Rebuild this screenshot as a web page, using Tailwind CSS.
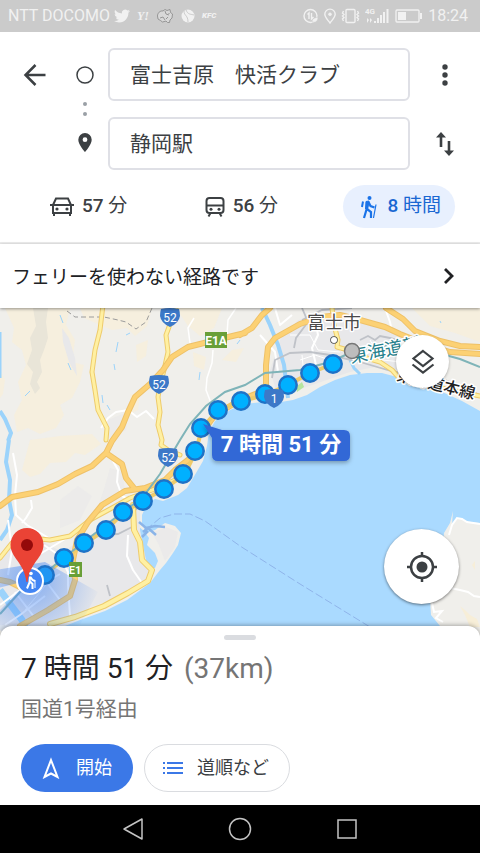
<!DOCTYPE html>
<html lang="ja">
<head>
    <meta charset="UTF-8"/>
    <meta name="viewport" content="width=device-width, initial-scale=1"/>
    <title>富士吉原 快活クラブ → 静岡駅</title>
    <script src="https://cdn.jsdelivr.net/npm/@tailwindcss/browser@4"></script>
</head>

<body class="flex min-h-screen flex-col bg-white font-['Roboto','Noto_Sans_CJK_JP',sans-serif] text-[#3c4043]">

    <!-- status bar -->
    <div class="flex h-8 items-center justify-between bg-[#cbcbcb] px-2 text-base leading-8 text-[#f1f1f1]">
        <div class="flex items-center gap-1">
            <span>NTT DOCOMO</span>
            <svg class="h-4 w-4" viewBox="0 0 24 24" fill="currentColor"><path d="M23.95 4.57a10 10 0 01-2.82.77 4.96 4.96 0 002.16-2.72c-.95.55-2 .95-3.13 1.18a4.92 4.92 0 00-8.38 4.48C7.69 8.1 4.07 6.13 1.64 3.16a4.82 4.82 0 00-.67 2.48c0 1.71.87 3.21 2.19 4.1a4.9 4.9 0 01-2.23-.62v.06a4.92 4.92 0 003.95 4.83 5 5 0 01-2.21.08 4.94 4.94 0 004.6 3.42A9.87 9.87 0 010 19.54a14 14 0 007.55 2.21c9.05 0 14-7.5 14-13.98l-.02-.64a9.94 9.94 0 002.46-2.55z"/></svg>
            <span class="w-[18px] text-center font-['Liberation_Serif',serif] text-xs font-bold italic">Y!</span>
            <svg class="h-4 w-[18px]" viewBox="0 0 18 16" fill="none" stroke="#8e8e8e" stroke-width=".9"><path fill="#d8d8d8" d="M1.500 8C1.500 5 4 2.500 7 3l2-1.500 2 1 3-1 .5 3 2 1.500-.5 4-2 2-.5 2.500H11.500L10 13 6.500 14 4.500 12.500 2 11z"/><path d="M9 3l1 3 3 1M4 10l3-1 2 3M12 9l-2 2M13 5v1"/></svg>
            <svg class="h-4 w-5" viewBox="0 0 20 16"><circle cx="10" cy="8" r="6.500" fill="currentColor"/><path d="M6 3c0 5 4 4 4 11M8 2c2 5 5 4 8 5" fill="none" stroke="#cbcbcb" stroke-width="1"/></svg>
            <span class="text-[8px] font-black italic">KFC</span>
        </div>
        <div class="flex items-center gap-[5px]">
            <svg class="h-4 w-4" viewBox="0 0 16 16" fill="none" stroke="currentColor" stroke-width="1.400"><circle cx="7.500" cy="8" r="6.500"/><path d="M4.500 6.500L6 5v6M8.500 5v6l2-2"/><path d="M9 14c0-4 3-4 6-5 0 4-2 6-6 5z" fill="currentColor" stroke="#cbcbcb" stroke-width=".6"/></svg>
            <svg class="h-4 w-3" viewBox="1 0 12 16" fill="none" stroke="currentColor" stroke-width="1.400"><path d="M7 15C4 11 1.800 9 1.800 6.300a5.200 5.200 0 0110.400 0C12.200 9 10 11 7 15z"/><circle cx="7" cy="6.300" r="1.700" fill="currentColor" stroke="none"/></svg>
            <svg class="h-4 w-[19px]" viewBox="0 0 19 16" fill="none" stroke="currentColor" stroke-width="1.400"><rect x="5" y="1.500" width="9" height="13" rx="1"/><path d="M2.500 3l-1 2 1.500 1.500L1.500 8 3 9.500 1.500 11l1 2M16.500 3l1 2L16 6.500 17.500 8 16 9.500l1.500 1.500-1 2"/></svg>
            <svg class="h-[18px] w-[25px]" viewBox="0 0 25 18" fill="currentColor"><text x="0" y="7" font-size="8" font-weight="700">4G</text><path d="M2 16v-5l2 2zM5 11v5l2-3zM9 14h2v2H9zM12 11h2v5h-2zM15 8h2v8h-2zM18 5h2v11h-2zM21.500 2h2v14h-2z"/></svg>
            <svg class="h-4 w-7" viewBox="0 0 28 16"><rect x="1" y="2" width="23" height="12" rx="1" fill="none" stroke="currentColor" stroke-width="1.300"/><path d="M3 4h8v8H3zM25 5h2v6h-2z" fill="currentColor"/></svg>
            <time class="pr-1">18:24</time>
        </div>
    </div>

    <!-- origin / destination -->
    <header class="border-b-2 border-[#ececec] pt-4 pb-[14px]">
        <form class="grid grid-cols-[70px_30px_1fr_70px] gap-y-4">
            <button type="button" aria-label="戻る" class="flex items-center justify-center">
                <svg class="h-6 w-6" viewBox="0 0 24 24" fill="none" stroke="currentColor" stroke-width="2.500"><path d="M22.500 12H3M12.500 2L2.500 12l10 10"/></svg>
            </button>
            <div class="row-span-2 flex flex-col items-center justify-between py-[17px]">
                <svg class="h-5 w-5" viewBox="0 0 20 20"><circle cx="10" cy="10" r="8" fill="none" stroke="currentColor" stroke-width="1.500"/></svg>
                <svg class="h-[14px] w-1" viewBox="0 0 4 14" fill="#9aa0a6"><circle cx="2" cy="2" r="2"/><circle cx="2" cy="12" r="2"/></svg>
                <svg class="h-5 w-4" viewBox="0 0 16 20"><path fill="currentColor" fill-rule="evenodd" d="M8 0a6.700 6.700 0 00-6.700 6.700C1.300 11.700 8 19 8 19s6.700-7.300 6.700-12.300A6.700 6.700 0 008 0zm0 4.300a2.400 2.400 0 110 4.800 2.400 2.400 0 010-4.800z"/></svg>
            </div>
            <input type="text" aria-label="出発地" value="富士吉原　快活クラブ" class="ml-2 h-[53px] min-w-0 rounded-md border-2 border-[#dfe0e6] px-5 pb-1 text-[21px]"/>
            <button type="button" aria-label="メニュー" class="flex items-center justify-center">
                <svg class="h-6 w-6" viewBox="0 0 24 24" fill="currentColor"><circle cx="12" cy="4" r="2.700"/><circle cx="12" cy="12" r="2.700"/><circle cx="12" cy="20" r="2.700"/></svg>
            </button>
            <span></span>
            <input type="text" aria-label="目的地" value="静岡駅" class="ml-2 h-[53px] min-w-0 rounded-md border-2 border-[#dfe0e6] px-5 pb-1 text-[21px]"/>
            <button type="button" aria-label="出発地と目的地を入れ替え" class="flex items-center justify-center">
                <svg class="h-6 w-5" viewBox="0 0 20 24" fill="none" stroke="currentColor" stroke-width="2.600"><path d="M6 15V3M14 9v12"/><path d="M1 5.500L6 0l5 5.500zM9 18.500l5 5.500 5-5.500z" fill="currentColor" stroke="none"/></svg>
            </button>
        </form>

        <nav class="mt-[15px] flex justify-between pr-[25px] pl-[30px] text-[19px] font-medium">
            <button class="flex h-[43px] items-center gap-2 px-5">
                <svg class="h-5 w-6" viewBox="0 0 24 20" fill="none" stroke="currentColor" stroke-width="2"><path d="M3 8l3-6.500h12L21 8v8H3zM3 8h18M4 16v3M20 16v3M0 8h3M21 8h3"/><circle cx="7" cy="12" r="1.600" fill="currentColor" stroke="none"/><circle cx="17" cy="12" r="1.600" fill="currentColor" stroke="none"/></svg>
                <span>57 <span class="font-normal">分</span></span>
            </button>
            <button class="flex h-[43px] items-center gap-2 pr-6 pl-4">
                <svg class="h-5 w-5" viewBox="0 0 20 20" fill="none" stroke="currentColor" stroke-width="2"><rect x="1.500" y="1" width="17" height="15" rx="3"/><path d="M1.500 8.500h17M5.500 16L3.500 19.500M14.500 16l2 3.500"/><circle cx="6" cy="12.200" r="1.500" fill="currentColor" stroke="none"/><circle cx="14" cy="12.200" r="1.500" fill="currentColor" stroke="none"/></svg>
                <span>56 <span class="font-normal">分</span></span>
            </button>
            <button class="flex h-[43px] items-center gap-2 rounded-full bg-[#e8f0fe] pr-[14px] pl-4 text-[#1967d2]">
                <svg class="h-6 w-5" viewBox="0 0 20 24" fill="#1a73e8" stroke="#1a73e8"><circle cx="10.500" cy="3" r="2" stroke="none"/><path fill="none" stroke-width="2.200" d="M9 7L7.500 14.500 5 23M8 14l4 3v6M9.500 7l2 4 4 1.500"/><path d="M7 6.500l3-.5-1.500 9L6.500 14z"/><path fill="none" stroke-width="2" d="M4 6.500l-1 5.500"/><path fill="none" stroke-width="1.200" d="M17 9.500L14.500 23"/></svg>
                <span>8 <span class="font-normal">時間</span></span>
            </button>
        </nav>
    </header>

    <a href="#" class="relative z-10 flex h-16 items-center justify-between bg-white pr-[25px] pl-3 text-[#202124] shadow-[0_1px_3px_rgba(0,0,0,0.4)]">
        <span class="pt-1 text-[19px]">フェリーを使わない経路です</span>
        <svg class="h-4 w-3" viewBox="0 0 12 16" fill="none" stroke="currentColor" stroke-width="2.800"><path d="M2 1l7 7-7 7"/></svg>
    </a>

    <!-- map -->
    <main class="relative min-h-[331px] flex-1 overflow-hidden bg-[#aadaff]">
        <svg class="absolute inset-0 h-full w-full" viewBox="0 308 480 331" preserveAspectRatio="xMidYMid slice">
            <defs>
                <radialGradient id="beam" gradientUnits="userSpaceOnUse" cx="30" cy="580" r="72">
                    <stop offset="0" stop-color="#4285f4" stop-opacity=".6"/>
                    <stop offset="1" stop-color="#4285f4" stop-opacity="0"/>
                </radialGradient>
                <filter id="drop" x="-20%" y="-40%" width="140%" height="200%"><feDropShadow dx="0" dy="2" stdDeviation="2" flood-opacity=".3"/></filter>
                <path id="shield" d="M-9-9Q0-11 9-9Q10-6 10-2Q9 5 0 9Q-9 5-10-2Q-10-6-9-9z"/>
            </defs>

            <!-- land -->
            <path fill="#f0efeb" d="M0 300H480V411L462 401 440 391 420 383 397 377 382 373 367 373 350 375 335 380 320 387 307 395 293 400 281 402 262 402 244 404 230 410 215 421 209 432 207 446 203 461 196 473 187 488 178 495 163 501 155 499 147 504 142 515 142 523 146 533 155 530 165 523 175 526 181 533 178 545 173 553 166 563 160 570 150 583 127 600 105 611 80 620 60 628 40 640H0z"/>
            <path fill="#aadaff" d="M138 526L144 531 149 538 147 545 155 553 158 561 155 568 149 568 143 561 141 550 137 541z"/>
            <path fill="#f0efeb" d="M453 511L450 523 444 533 440 570 430 600 431 615 440 626 446 640H480V523L467 522 462 518 457 518 452 525z"/>
            <path fill="none" stroke="#fff" stroke-width="2" d="M480 524L467 522 462 519 457 518 452 525 449 535M450 588L460 590 468 592 474 596 480 597M432 603L434 612 442 611 436 618 443 622"/>
            <path fill="#f7eed8" d="M472 565l3-4v9zM460 606l6 5 4 4 7 4 3 8h-10l-5-12z"/>

            <!-- hills -->
            <path fill="#f7efdc" d="M5 308H70L66 325 75 340 72 362 84 365 80 382 72 398 60 405 64 415 56 428 40 434 28 428 17 432 14 415 22 400 18 382 26 365 22 350 12 342 14 328zM80 308H152L147 326 135 336 127 328 112 330 98 324 84 318zM136 345L148 340 146 356 137 362zM0 370l5 10-2 14-3 4zM30 440L60 436 92 434 101 444 85 455 75 453 66 462 50 463 40 474 30 477 22 470zM176 308H222L214 328 200 336 188 326zM193 352L206 357 204 370 194 366zM130 395L140 392 138 410 130 414zM222 360l10-10 12-2-8 14zM412 308H480V342L455 333 430 326z" opacity=".85"/>
            <path fill="#e9e5d8" d="M33 308H48L46 322 48 338 44 350 40 360 42 372 37 382 40 388 35 394 30 384 33 372 27 364 32 350 30 338 36 326z"/>
            <g fill="#e8e8ea">
                <path d="M298 320L345 312 375 325 420 345 430 366 405 372 380 366 350 372 318 383 292 392 276 390 270 370 280 340z"/>
                <path d="M62 328l7 10 6 20 2 18-8-14-6-20zM10 545L40 540 62 552 90 535 112 525 124 512 140 505 140 530 150 580 120 596 84 610 50 625H0V560z"/>
                <path d="M110 468l12 4 3 18-14 10-12 4 6-18zM60 500l18-14 14 10-12 24-20 8zM108 420l20-8-2 18-18 8z" opacity=".5"/>
                <path d="M152 533l14-6 12 5-3 15-10 14-6-16z" opacity=".7"/>
            </g>
            <path fill="#b6e59e" d="M296 387l6-5 2 5-7 5z"/>

            <!-- rivers -->
            <g fill="none" stroke="#9bd3fb">
                <path stroke-width="3" d="M0 332V378"/>
                <path stroke-width="4" d="M9 440L6 462 10 480 9 500 12 515 7 530 0 540M0 411l5 8 6 14-3 8"/>
                <path stroke-width="7" d="M0 590L10 604 22 620 30 640"/>
                <path stroke-width="4" d="M262 308L270 325 278 345 284 365 288 398"/>
                <path stroke-width="3" d="M350 360l4 8 6 6"/>
                <path stroke-width="1" d="M60 315l3 8M118 342l-2 10M114 364l1 6M68 363l3 7M25 396l5-5M102 395l1 8M126 335l4-2M200 372l-1 8M107 405l3 5M240 340l-3 4M440 321l1 2"/>
            </g>

            <!-- minor roads -->
            <g fill="none" stroke="#fff" stroke-width="2" stroke-linejoin="round">
                <path stroke-width="1.500" d="M194 318L188 328 190 343M213 350L212 363 207 378 206 390 211 403M227 334L228 320 236 308"/>
                <path d="M101 428L108 418 116 412 128 410 137 417 146 411 154 419M13 453L17 475 15 495 16 515 27 525 52 540M31 500L32 508 26 518 22 523M113 461L118 470 117 482 122 496 130 500M128 535L127 556 133 570 142 583"/>
                <path d="M44 545L60 556 68 572 68 585 70 616M260 335L275 352 278 372M275 308L280 325 292 315M315 318L318 335 312 348 316 365M340 350L365 354 385 345 400 350M385 308L390 322 392 332M0 605L20 590 35 588 60 574M5 625L20 615 45 596M15 592L35 618M45 580L60 600M30 560L55 545 70 536M8 520l4 30-4 25"/>
                <path stroke-width="1" d="M290 335h20l8 15 22 2M300 360l15-5 15 5M304 375l-2-20M370 340l12 20 20 2M10 600l25-25 16-10M25 610l25-30"/>
            </g>

            <!-- dashed boundaries and ferry line -->
            <path fill="none" stroke="#9c9c9c" stroke-width="1" stroke-dasharray="5 3" d="M67 311L75 317 90 317 104 317 118 320 126 322 136 329 146 322 152 308"/>
            <path fill="none" stroke="#8fb4ea" stroke-width="1" stroke-dasharray="8 3" d="M146 530L160 518 174 514 190 514 205 521 240 546 300 584 370 627"/>
            <path fill="none" stroke="#8ab4e8" stroke-width="2.500" d="M139 522l7 6 9-2 10 1M143 532l5-4 8 7M142 537l6-6"/>

            <!-- railways -->
            <g fill="none" stroke="#bfc2c8" stroke-width="1.800">
                <path d="M302 308L308 322 296 338 294 348M302 320l20-10 30-2M360 340L368 336 375 340 380 336 390 338 398 340M272 378L275 360 290 353 310 352 330 355 360 362 395 372 440 378 480 395M100 535L118 534 132 527 135 510 150 500M107 585l3 11"/>
            </g>

            <!-- trunk roads: casing first, then the fill -->
            <g fill="none" stroke-linejoin="round" stroke-linecap="round">
                <path stroke="#eecb6b" stroke-width="5" d="M103 305L100 330 95 350 92 372 95 390 98 410 107 428 106 440M176 308L166 335 168 352 164 370 160 385 158 397 160 412 158 425 162 440 161 445 168 450 180 455M332 308L334 325 338 340 337 347 348 350 360 356 380 362 392 370 400 379 430 385 450 390 480 396M0 558L12 543 30 538 50 540 70 536 90 520 112 508 130 498 152 490 180 478"/>
                <path stroke="#fff0a2" stroke-width="3" d="M103 305L100 330 95 350 92 372 95 390 98 410 107 428 106 440M176 308L166 335 168 352 164 370 160 385 158 397 160 412 158 425 162 440 161 445 168 450 180 455M332 308L334 325 338 340 337 347 348 350 360 356 380 362 392 370 400 379 430 385 450 390 480 396M0 558L12 543 30 538 50 540 70 536 90 520 112 508 130 498 152 490 180 478"/>
                <path stroke="#eecb6b" stroke-width="6" d="M133 505L134 530 140 542 142 560 152 570 148 581 128 593 104 606 75 617 50 624"/>
                <path stroke="#fff0a2" stroke-width="4" d="M133 505L134 530 140 542 142 560 152 570 148 581 128 593 104 606 75 617 50 624"/>
                <path stroke="#eec168" stroke-width="6" d="M245 333L220 339 188 347 172 357 163 370 150 384 135 397 128 412 122 427 112 441 106 453 92 466 75 474 58 484 38 492 12 497 0 506M106 453L122 464 126 478 134 488M194 452L188 460 175 470 165 480 145 488 125 491 102 505 88 522 77 540 73 560 75 580 70 596 48 610 20 626M204 430L215 415 240 400 258 393 266 385 266 365 268 347 275 338 300 324 320 317 340 315 360 320 385 327 400 334 430 346 450 352 480 354M386 308L403 319 415 331 440 341 460 346 480 347M240 335L252 328 262 315 270 308M0 580L10 582 30 592"/>
                <path stroke="#fcd174" stroke-width="4" d="M245 333L220 339 188 347 172 357 163 370 150 384 135 397 128 412 122 427 112 441 106 453 92 466 75 474 58 484 38 492 12 497 0 506M106 453L122 464 126 478 134 488M194 452L188 460 175 470 165 480 145 488 125 491 102 505 88 522 77 540 73 560 75 580 70 596 48 610 20 626M204 430L215 415 240 400 258 393 266 385 266 365 268 347 275 338 300 324 320 317 340 315 360 320 385 327 400 334 430 346 450 352 480 354M386 308L403 319 415 331 440 341 460 346 480 347M240 335L252 328 262 315 270 308M0 580L10 582 30 592"/>
                <path stroke="#eecb6b" stroke-width="4" d="M45 574L85 543 107 529 124 512 144 500 166 488 185 474 196 451 202 428 218 410 242 401 265 395 288 385 310 373 333 364"/>
            </g>
            <path fill="none" stroke="#7fb4b8" stroke-width="2" d="M0 614L20 592 45 573 85 541 115 518 143 497 160 474 180 440 190 424 206 406 225 392 245 385 265 373 300 370 330 362 352 352 390 345M438 353L460 359 480 367"/>

            <!-- heading beam -->
            <path fill="url(#beam)" d="M30 580L-10 590V571L45 562 98 592 80 625 20 650-10 620z"/>

            <!-- road shields -->
            <g font-size="12" fill="#fff" text-anchor="middle">
                <g fill="#3c78c8"><use href="#shield" x="170" y="318"/><use href="#shield" x="159" y="385"/><use href="#shield" x="168" y="458"/></g>
                <text x="170" y="322">52</text><text x="159" y="389">52</text><text x="168" y="462">52</text>
                <path fill="#689f38" d="M205 332h22v16h-22z"/>
                <text x="216" y="345" font-weight="700">E1A</text>
            </g>

            <!-- place labels -->
            <g font-family="Noto Sans CJK JP" stroke="#fff" stroke-width="3" paint-order="stroke" stroke-linejoin="round">
                <text x="307" y="329" font-size="18" fill="#4a4a4a">富士市</text>
                <circle cx="334" cy="340" r="3" fill="#fff" stroke="#444" stroke-width="1.500"/>
                <text transform="translate(351 363) rotate(-11)" font-size="18" fill="#24808c">東海道新</text>
                <text transform="translate(396 380) rotate(14)" font-size="16" font-weight="500" fill="#222">東海道本線</text>
            </g>

            <!-- walking route -->
            <g fill="#00b0ff" stroke="#1f72c6" stroke-width="2.500">
                <circle cx="333" cy="364" r="8.700"/><circle cx="310" cy="373" r="8.700"/><circle cx="288" cy="385" r="8.700"/><circle cx="265" cy="394" r="8.700"/>
                <circle cx="241" cy="401" r="8.700"/><circle cx="218" cy="410" r="8.700"/><circle cx="201" cy="428" r="8.700"/><circle cx="195" cy="451" r="8.700"/>
                <circle cx="183" cy="474" r="8.700"/><circle cx="164" cy="489" r="8.700"/><circle cx="143" cy="501" r="8.700"/><circle cx="123" cy="512" r="8.700"/>
                <circle cx="106" cy="530" r="8.700"/><circle cx="84" cy="543" r="8.700"/><circle cx="64" cy="558" r="8.700"/><circle cx="45" cy="575" r="8.700" fill="#2196f3"/>
                <circle cx="352" cy="351" r="7.500" fill="#bdbdbd" stroke="#777" stroke-width="1.500"/>
            </g>
            <use href="#shield" x="274" y="399" fill="#3c78c8"/>
            <path fill="#689f38" d="M69 562h13v15H69z"/>
            <g fill="#fff" text-anchor="middle">
                <text x="274" y="403" font-size="12">1</text>
                <text x="75" y="574" font-size="11" font-weight="700">E1</text>
            </g>

            <!-- destination pin over the current position -->
            <circle cx="30" cy="581" r="13" fill="#4285f4" stroke="#fff" stroke-width="2"/>
            <path fill="#ea4335" d="M27 528A16.500 16.500 0 0010.500 544.500C10.500 558 24 562 26.500 582H27.500C30 562 43.500 558 43.500 544.500A16.500 16.500 0 0027 528z"/>
            <circle cx="27" cy="545" r="6" fill="#940a0a"/>
            <g fill="none" stroke="#fff" stroke-width="2"><circle cx="31" cy="573.500" r="1.800" fill="#fff" stroke="none"/><path d="M30 576.500l-.5 6-2.500 6M29.500 581l3 3v5M30.500 577l2 3 2.500 1"/><path stroke-width="1" d="M35 580v8"/></g>

            <!-- duration callout -->
            <g filter="url(#drop)" fill="#3367d6"><path d="M203 424L222 430H344Q350 430 350 436V455Q350 461 344 461H218Q212 461 212 455V438z"/></g>
            <text x="281" y="452" font-size="22" font-weight="700" fill="#fff" text-anchor="middle">7 時間 51 分</text>
        </svg>

        <button aria-label="レイヤ" class="absolute top-[27px] right-[31px] flex size-[53px] items-center justify-center rounded-full bg-white shadow-[0_1px_3px_rgba(0,0,0,0.3)]">
            <svg class="h-[26px] w-6" viewBox="0 0 24 26" fill="none" stroke="currentColor" stroke-width="2.200"><path d="M12 2l9.500 7.500L12 17 2.500 9.500zM1.500 15.500L12 23.500l10.500-8"/></svg>
        </button>
        <button aria-label="現在地" class="absolute right-[21px] bottom-[35px] flex size-[75px] items-center justify-center rounded-full bg-white shadow-[0_1px_3px_rgba(0,0,0,0.5)]">
            <svg class="h-[30px] w-[30px]" viewBox="0 0 30 30" fill="none" stroke="currentColor" stroke-width="2.500"><circle cx="15" cy="15" r="11"/><circle cx="15" cy="15" r="5.500" fill="currentColor" stroke="none"/><path d="M15 0v5M15 25v5M0 15h5M25 15h5"/></svg>
        </button>
    </main>

    <!-- bottom sheet -->
    <section class="relative -mt-[13px] rounded-t-xl bg-white px-[21px] pt-[9px] pb-[13px] shadow-[0_-1px_4px_rgba(0,0,0,0.3)]">
        <div class="mx-auto h-[5px] w-8 rounded-full bg-[#dadce0]"></div>
        <h1 class="mt-[9px] text-[28px] leading-10 text-[#202124]">7 時間 51 分 <span class="ml-1 text-[#757575]">(37km)</span></h1>
        <p class="text-[21px] leading-10 text-[#757575]">国道1号経由</p>
        <div class="mt-[15px] flex gap-[11px] text-lg">
            <button class="flex h-12 items-center gap-4 rounded-full bg-[#3b78e7] px-[21px] text-white">
                <svg class="h-[22px] w-[18px]" viewBox="0 0 18 22" fill="none" stroke="currentColor" stroke-width="2"><path d="M9 3l6.500 17L9 16.500 2.500 20z"/></svg>
                開始
            </button>
            <button class="flex h-12 items-center gap-[14px] rounded-full border border-[#dadce0] pr-5 pl-[18px]">
                <svg class="h-3 w-5" viewBox="0 0 20 12" fill="#3b78e7"><path d="M0 0h2v2H0zM0 5h2v2H0zM0 10h2v2H0zM4 0h16v2H4zM4 5h16v2H4zM4 10h16v2H4z"/></svg>
                道順など
            </button>
        </div>
    </section>

    <!-- system navigation -->
    <footer class="flex h-12 items-center justify-center gap-[83px] bg-black text-[#c4c4c4]">
        <button aria-label="戻る"><svg class="h-6 w-6" viewBox="0 0 24 24" fill="none" stroke="currentColor" stroke-width="1.500" stroke-linejoin="round"><path d="M21 2v20L3 12z"/></svg></button>
        <button aria-label="ホーム"><svg class="h-6 w-6" viewBox="0 0 24 24" fill="none" stroke="currentColor" stroke-width="1.500"><circle cx="12" cy="12" r="10.500"/></svg></button>
        <button aria-label="最近使ったアプリ"><svg class="h-6 w-6" viewBox="0 0 24 24" fill="none" stroke="currentColor" stroke-width="1.500"><path d="M3 3h18v18H3z"/></svg></button>
    </footer>
</body>
</html>
